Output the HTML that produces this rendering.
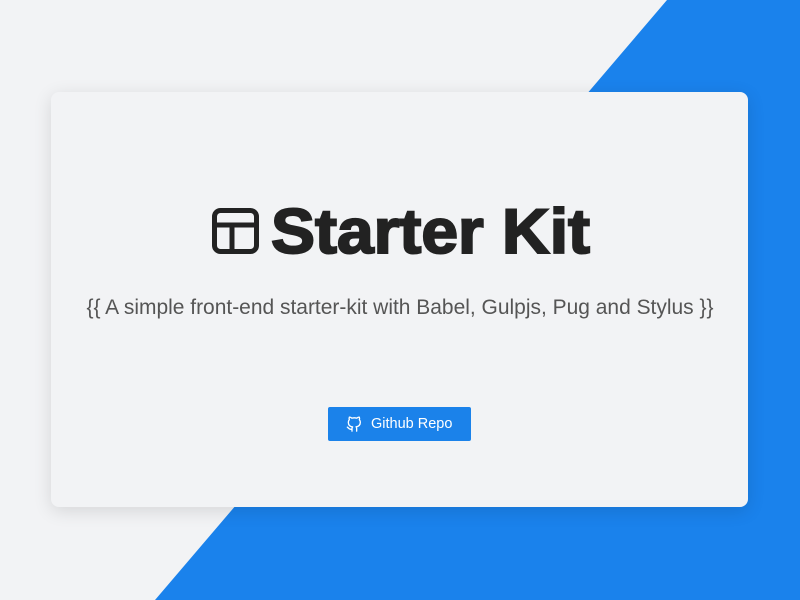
<!DOCTYPE html>
<html><head><style>
html,body{margin:0;padding:0;width:800px;height:600px;overflow:hidden;background:#f2f3f5;font-family:"Liberation Sans",sans-serif}
.bg{position:absolute;left:0;top:0}
.card{position:absolute;left:51px;top:92px;width:697px;height:415px;background:#f2f3f5;border-radius:8px;box-shadow:0 4px 18px rgba(0,0,0,0.12)}
.title{position:absolute;left:0;top:197px;width:800px;height:70px}
.t{position:absolute;left:271px;top:0;font-weight:bold;font-size:63px;color:#222;-webkit-text-stroke:2px #222;letter-spacing:0px;white-space:nowrap;line-height:70px;transform-origin:left;}
.sub{position:absolute;left:0;width:800px;top:296px;text-align:center;font-size:21px;color:#555;white-space:nowrap}
.sub span{display:inline-block;transform-origin:center}
.btn{position:absolute;left:328px;top:407px;width:143px;height:34px;background:#1b82ea;border-radius:2px;color:#fff;font-size:14.5px;line-height:35px}
</style></head><body>
<svg class="bg" width="800" height="600"><polygon points="667,0 800,0 800,600 155,600" fill="#1a82ec"/></svg>
<div class="card"></div>
<svg style="position:absolute;left:212px;top:208px" width="47" height="46" viewBox="0 0 47 46"><rect x="2.5" y="2.5" width="42" height="41" rx="6" fill="none" stroke="#222" stroke-width="5"/><line x1="2" y1="17" x2="45" y2="17" stroke="#222" stroke-width="5"/><line x1="20" y1="17" x2="20" y2="44" stroke="#222" stroke-width="5"/></svg>
<div class="title"><div class="t" id="t">Starter Kit</div></div>
<div class="sub"><span id="s">{{ A simple front-end starter-kit with Babel, Gulpjs, Pug and Stylus }}</span></div>
<div class="btn"><svg style="position:absolute;left:18px;top:9px" width="16" height="17" viewBox="0 0 24 24" fill="none" stroke="#fff" stroke-width="2" stroke-linecap="round" stroke-linejoin="round"><path d="M9 19c-5 1.5-5-2.5-7-3m14 6v-3.87a3.37 3.37 0 0 0-.94-2.610c3.14-.35 6.44-1.54 6.44-7A5.44 5.440 0 0 0 20 4.77 5.07 5.07 0 0 0 19.91 1S18.73.65 16 2.48a13.38 13.38 0 0 0-7 0C6.27.65 5.09 1 5.09 1A5.07 5.07 0 0 0 5 4.77a5.44 5.44 0 0 0-1.5 3.78c0 5.42 3.3 6.61 6.44 7A3.37 3.37 0 0 0 9 18.13V22"/></svg><span style="position:absolute;left:43px;top:0">Github Repo</span></div>
<script>var t=document.getElementById('t');var w=t.getBoundingClientRect().width;t.style.transform='scaleX('+(319/w)+')';
var s=document.getElementById('s');var sw=s.getBoundingClientRect().width;s.style.transform='scaleX('+(627/sw)+')';</script>
</body></html>
